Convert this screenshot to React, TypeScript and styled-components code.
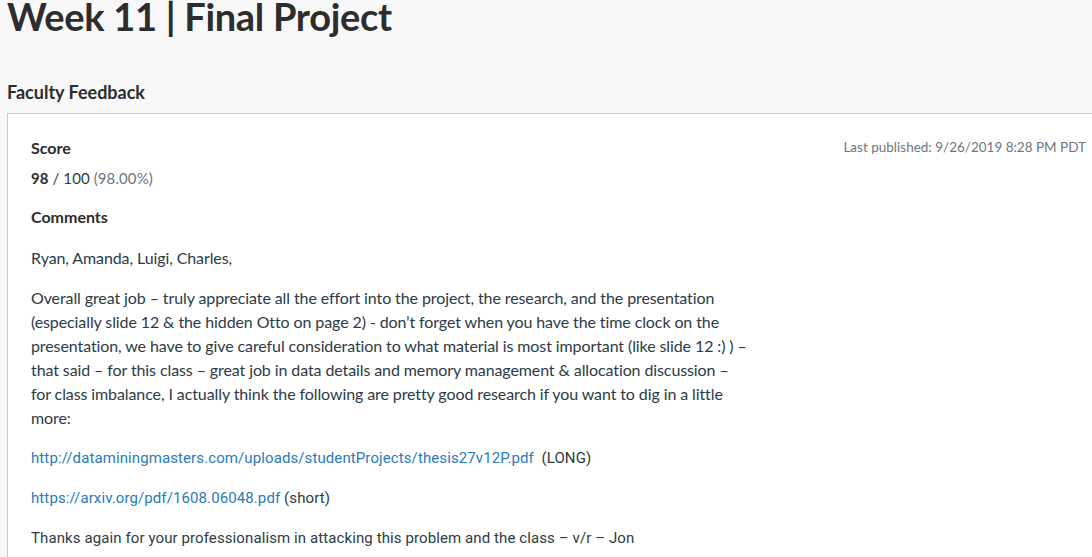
import React from 'react';
import styled, { createGlobalStyle } from 'styled-components';

const GlobalStyle = createGlobalStyle`
  html, body {
    margin: 0;
    padding: 0;
    background: #f8f8f8;
    overflow: hidden;
  }
  body {
    font-family: Lato, "Open Sans", sans-serif;
    color: #2d3b45;
  }
`;

const Page = styled.div`
  padding: 0 0 0 7px;
  width: 1092px;
  height: 557px;
  box-sizing: border-box;
  overflow: hidden;
`;

const Title = styled.h1`
  margin: -7px 0 0 0;
  font-size: 38px;
  line-height: 46px;
  font-weight: 700;
  color: #2d2d2d;
  letter-spacing: -0.3px;
`;

const SectionHeading = styled.h2`
  margin: 42px 0 10px 0;
  font-size: 18px;
  line-height: 22px;
  font-weight: 700;
  color: #2d2d2d;
`;

const Panel = styled.div`
  background: #fff;
  border: 1px solid #c7cdd1;
  border-right: none;
  padding: 23px 6px 40px 23px;
  min-height: 520px;
  display: flex;
  justify-content: space-between;
  align-items: flex-start;
`;

const Main = styled.div`
  flex: 0 0 718px;
`;

const Label = styled.div`
  font-size: 16px;
  font-weight: 700;
  line-height: 22px;
  color: #2d2d2d;
`;

const ScoreLine = styled.div`
  margin: 8px 0 17px;
  font-size: 15px;
  line-height: 22px;
  letter-spacing: 0.1px;
  color: #2d3b45;
  b { font-weight: 700; color: #2d2d2d; }
`;

const Muted = styled.span`
  color: #6b7780;
`;

const Published = styled.div`
  font-size: 13.5px;
  line-height: 20px;
  color: #6b7780;
  white-space: nowrap;
`;

const Comment = styled.div`
  margin-top: 18px;
  font-size: 16px;
  line-height: 24px;
  letter-spacing: -0.1px;
  color: #2d3b45;
`;

const Para = styled.p<{ narrow?: boolean }>`
  margin: 0 0 16px;
  font-family: ${p => (p.narrow ? 'Roboto, "Liberation Sans", sans-serif' : 'inherit')};
  font-size: ${p => (p.narrow ? '15px' : 'inherit')};
  letter-spacing: ${p => (p.narrow ? '0.1px' : 'inherit')};
`;

const Link = styled.a`
  color: #2b7abc;
  text-decoration: none;
`;

export default function App() {
  return (
    <Page>
      <GlobalStyle />
      <Title>Week 11 | Final Project</Title>
      <SectionHeading>Faculty Feedback</SectionHeading>
      <Panel>
        <Main>
          <Label>Score</Label>
          <ScoreLine>
            <b>98</b> / 100 <Muted>(98.00%)</Muted>
          </ScoreLine>
          <Label>Comments</Label>
          <Comment>
            <Para>Ryan, Amanda, Luigi, Charles,</Para>
            <Para>
              Overall great job – truly appreciate all the effort into the project, the research, and the presentation
              (especially slide 12 &amp; the hidden Otto on page 2) - don’t forget when you have the time clock on the
              presentation, we have to give careful consideration to what material is most important (like slide 12 :) ) –
              that said – for this class – great job in data details and memory management &amp; allocation discussion –
              for class imbalance, I actually think the following are pretty good research if you want to dig in a little
              more:
            </Para>
            <Para narrow>
              <Link href="#">http://dataminingmasters.com/uploads/studentProjects/thesis27v12P.pdf</Link>&nbsp; (LONG)
            </Para>
            <Para narrow>
              <Link href="#">https://arxiv.org/pdf/1608.06048.pdf</Link> (short)
            </Para>
            <Para narrow>
              Thanks again for your professionalism in attacking this problem and the class – v/r – Jon
            </Para>
          </Comment>
        </Main>
        <Published>Last published: 9/26/2019 8:28 PM PDT</Published>
      </Panel>
    </Page>
  );
}
